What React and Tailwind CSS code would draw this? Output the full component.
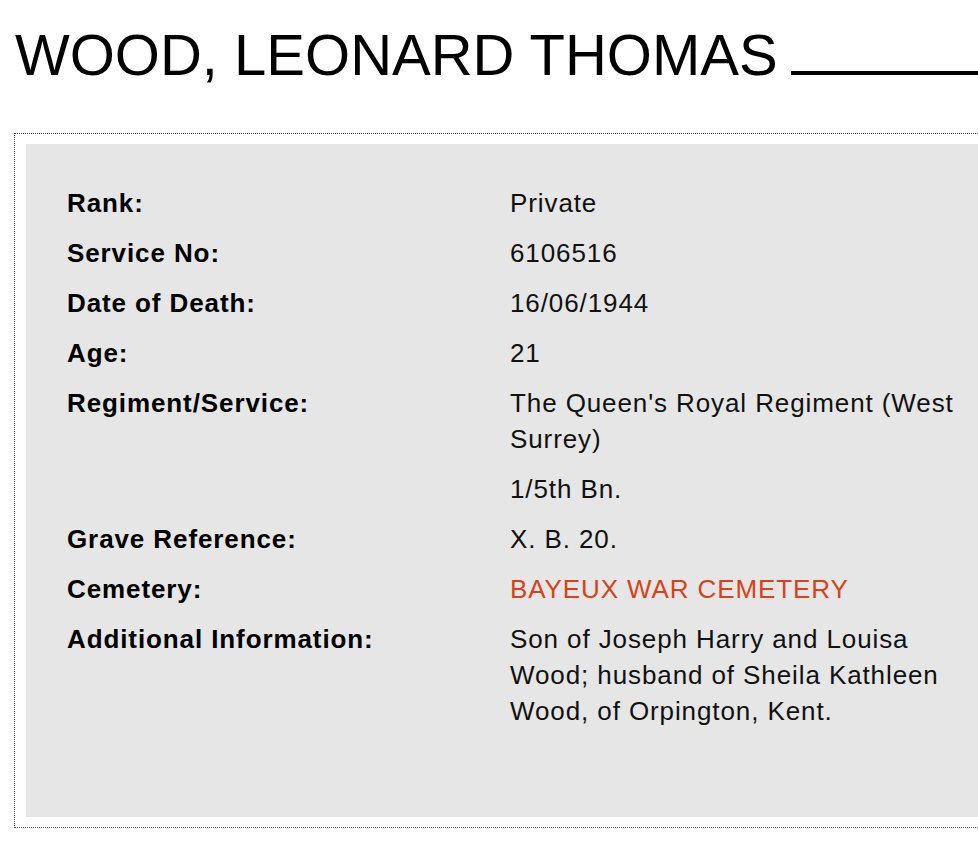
import React from 'react';

const details = [
    { label: 'Rank:', values: ['Private'] },
    { label: 'Service No:', values: ['6106516'] },
    { label: 'Date of Death:', values: ['16/06/1944'] },
    { label: 'Age:', values: ['21'] },
    { label: 'Regiment/Service:', values: ["The Queen's Royal Regiment (West Surrey)", '1/5th Bn.'] },
    { label: 'Grave Reference:', values: ['X. B. 20.'] },
    { label: 'Cemetery:', values: ['BAYEUX WAR CEMETERY'], link: true },
    { label: 'Additional Information:', values: ['Son of Joseph Harry and Louisa Wood; husband of Sheila Kathleen Wood, of Orpington, Kent.'] },
];

const App = () => {
    return (
        <div className="w-[978px] min-h-[849px] overflow-hidden bg-white font-['Liberation_Sans',Arial,sans-serif] text-black">
            {/* name heading with the rule running off to the right */}
            <div className="flex items-start pt-[26px] pl-[15px]">
                <h1 className="shrink-0 text-[58px] leading-[58px] font-normal whitespace-nowrap">
                    WOOD, LEONARD THOMAS
                </h1>
                <div className="ml-[13px] mt-[45px] h-[4px] flex-1 bg-black" />
            </div>

            <div className="mt-[49px] ml-[14px] w-[1000px] border border-dotted border-[#4a4a4a] pt-[10px] pb-[10px] pl-[11px]">
                <div className="bg-[#e6e6e6] pt-[41px] pb-[74px] pl-[41px]">
                    {details.map((row) => (
                        <div key={row.label} className="flex text-[26px] leading-[36px] tracking-[0.9px]">
                            <div className="w-[443px] shrink-0 font-bold">{row.label}</div>
                            <div className="w-[455px]">
                                {row.values.map((v) => (
                                    <p
                                        key={v}
                                        className={row.link ? 'mb-[14px] text-[#d5431a]' : 'mb-[14px] text-[#111]'}
                                    >
                                        {v}
                                    </p>
                                ))}
                            </div>
                        </div>
                    ))}
                </div>
            </div>
        </div>
    );
};

export default App;
